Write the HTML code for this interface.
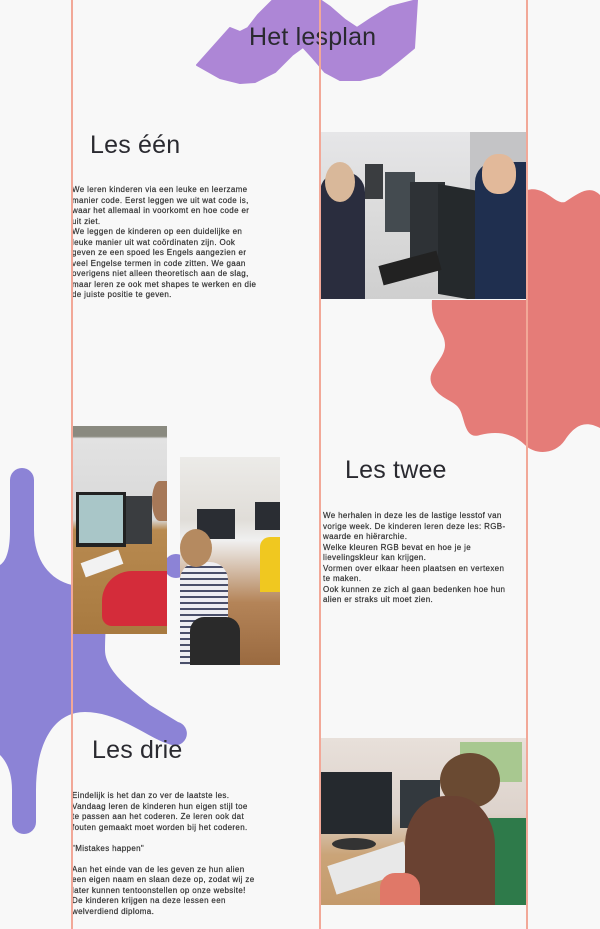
<!DOCTYPE html>
<html><head><meta charset="utf-8"><style>
*{margin:0;padding:0;box-sizing:border-box}
body{width:600px;height:929px;background:#f8f8f8;position:relative;overflow:hidden;font-family:"Liberation Sans",sans-serif;color:#333}
.abs{position:absolute}
.vl{position:absolute;top:0;width:2px;height:929px;background:#f2a898}
h1{position:absolute;font-weight:normal;color:#2a2a30;white-space:nowrap;letter-spacing:0.2px;font-size:25px;line-height:30px}
.t{position:absolute;font-size:8px;line-height:10.5px;color:#333;letter-spacing:0.35px;white-space:nowrap;-webkit-text-stroke:0.2px #333}
.img{position:absolute;overflow:hidden}
</style></head><body>
<svg class="abs" style="left:0;top:0" width="600" height="929">
<polygon points="197,65 230,28 240,32 248,28 258,15 273,0 320,0 330,7 345,20 357,28 372,18 390,7 417,0 414,48 397,62 380,75 360,80 340,80 325,72 313,58 303,47 292,55 275,72 255,82 240,83 220,78" fill="#ad86d6" stroke="#ad86d6" stroke-width="2" stroke-linejoin="round"/>
<path d="M527,190 C545,185 555,205 565,202 C580,192 590,185 600,195 L600,428 C585,420 575,425 565,440 C555,455 535,455 525,445 C515,435 500,430 480,435 C465,440 465,420 460,410 C455,400 440,400 432,385 C425,370 445,360 445,345 C445,330 430,325 432,300 L527,300 Z" fill="#e57c78"/>
<path d="M10,480 A12,12 0 0 1 34,480 L34,530 C34,560 50,580 72,585 L100,590 C110,600 105,620 105,650 C105,670 130,690 150,705 L178,722 A10,10 0 0 1 172,745 C150,740 120,712 85,712 C50,712 36,750 36,790 L36,822 A12,12 0 0 1 12,822 L12,790 C12,770 5,760 0,755 L0,565 C8,560 10,545 10,530 Z" fill="#8c83d6"/>
<circle cx="176" cy="566" r="12" fill="#8c83d6"/>
</svg>

<h1 style="left:249px;top:22px">Het lesplan</h1>
<h1 style="left:90px;top:130px">Les één</h1>
<h1 style="left:345px;top:455px">Les twee</h1>
<h1 style="left:92px;top:735px">Les drie</h1>

<div class="t" style="left:72px;top:185px">We leren kinderen via een leuke en leerzame<br>manier code. Eerst leggen we uit wat code is,<br>waar het allemaal in voorkomt en hoe code er<br>uit ziet.<br>We leggen de kinderen op een duidelijke en<br>leuke manier uit wat coördinaten zijn. Ook<br>geven ze een spoed les Engels aangezien er<br>veel Engelse termen in code zitten. We gaan<br>overigens niet alleen theoretisch aan de slag,<br>maar leren ze ook met shapes te werken en die<br>de juiste positie te geven.</div>

<div class="t" style="left:323px;top:511px">We herhalen in deze les de lastige lesstof van<br>vorige week. De kinderen leren deze les: RGB-<br>waarde en hiërarchie.<br>Welke kleuren RGB bevat en hoe je je<br>lievelingskleur kan krijgen.<br>Vormen over elkaar heen plaatsen en vertexen<br>te maken.<br>Ook kunnen ze zich al gaan bedenken hoe hun<br>alien er straks uit moet zien.</div>

<div class="t" style="left:72px;top:791px">Eindelijk is het dan zo ver de laatste les.<br>Vandaag leren de kinderen hun eigen stijl toe<br>te passen aan het coderen. Ze leren ook dat<br>fouten gemaakt moet worden bij het coderen.<br><br>"Mistakes happen"<br><br>Aan het einde van de les geven ze hun alien<br>een eigen naam en slaan deze op, zodat wij ze<br>later kunnen tentoonstellen op onze website!<br>De kinderen krijgen na deze lessen een<br>welverdiend diploma.</div>

<!-- image 1 -->
<div class="img" style="left:320px;top:132px;width:207px;height:167px;background:linear-gradient(180deg,#e6e6e8 0%,#dcdcdc 45%,#cfcfcf 100%)">
<div class="abs" style="left:150px;top:0;width:57px;height:60px;background:#c4c4c6"></div>
<div class="abs" style="left:0;top:40px;width:45px;height:127px;background:#2a2d3e;border-radius:20px 20px 0 0"></div>
<div class="abs" style="left:5px;top:30px;width:30px;height:40px;background:#d9b89a;border-radius:50%"></div>
<div class="abs" style="left:45px;top:32px;width:18px;height:35px;background:#3a3d40"></div>
<div class="abs" style="left:65px;top:40px;width:30px;height:60px;background:#444b50"></div>
<div class="abs" style="left:90px;top:50px;width:35px;height:80px;background:#2e3236"></div>
<div class="abs" style="left:118px;top:58px;width:70px;height:110px;background:#25292c;transform:skewY(10deg)"></div>
<div class="abs" style="left:155px;top:30px;width:52px;height:137px;background:#1f2f4f;border-radius:20px 0 0 0"></div>
<div class="abs" style="left:162px;top:22px;width:34px;height:40px;background:#e2b99a;border-radius:45%"></div>
<div class="abs" style="left:60px;top:126px;width:60px;height:20px;background:#222;transform:rotate(-15deg)"></div>
</div>

<!-- image 2a -->
<div class="img" style="left:72px;top:426px;width:95px;height:208px;background:linear-gradient(180deg,#8a8a80 0,#8a8a80 5%,#e2e2e2 6%,#d8d8d8 45%,#b88a50 50%,#a87a40 100%)">
<div class="abs" style="left:4px;top:66px;width:50px;height:55px;background:#222"></div>
<div class="abs" style="left:7px;top:69px;width:44px;height:48px;background:#a9c6c8"></div>
<div class="abs" style="left:54px;top:70px;width:26px;height:48px;background:#3a3d40"></div>
<div class="abs" style="left:30px;top:145px;width:65px;height:55px;background:#d42c3a;border-radius:30px 0 0 10px"></div>
<div class="abs" style="left:80px;top:55px;width:15px;height:40px;background:#a67858;border-radius:50% 0 0 50%"></div>
<div class="abs" style="left:10px;top:130px;width:40px;height:15px;background:#f2f2f2;transform:rotate(-20deg)"></div>
</div>

<!-- image 2b -->
<div class="img" style="left:180px;top:457px;width:100px;height:208px;background:linear-gradient(180deg,#ecebe8 0%,#e0ddd8 30%,#f0f0f0 40%,#b48458 70%,#9a6a40 100%)">
<div class="abs" style="left:17px;top:52px;width:38px;height:30px;background:#2a2d33"></div>
<div class="abs" style="left:75px;top:45px;width:25px;height:28px;background:#2a2d33"></div>
<div class="abs" style="left:80px;top:80px;width:20px;height:55px;background:#f0c820;border-radius:10px 0 0 0"></div>
<div class="abs" style="left:0px;top:105px;width:48px;height:103px;background:repeating-linear-gradient(180deg,#eeeef2 0 4px,#4a4f6a 4px 6px);border-radius:18px 18px 0 0"></div>
<div class="abs" style="left:0px;top:72px;width:32px;height:38px;background:#b58a60;border-radius:50%"></div>
<div class="abs" style="left:10px;top:160px;width:50px;height:48px;background:#2a2a2a;border-radius:14px 14px 0 0"></div>
</div>

<!-- image 3 -->
<div class="img" style="left:320px;top:738px;width:207px;height:167px;background:linear-gradient(180deg,#e8e0da 0%,#ddd3cc 45%,#caa478 70%,#c49a6c 100%)">
<div class="abs" style="left:140px;top:4px;width:62px;height:40px;background:#a8c890"></div>
<div class="abs" style="left:0;top:34px;width:72px;height:62px;background:#25292e"></div>
<div class="abs" style="left:80px;top:42px;width:40px;height:48px;background:#33393e"></div>
<div class="abs" style="left:12px;top:100px;width:44px;height:12px;background:#333;border-radius:50%"></div>
<div class="abs" style="left:10px;top:115px;width:80px;height:30px;background:#e8e8e8;transform:rotate(-18deg)"></div>
<div class="abs" style="left:120px;top:15px;width:60px;height:55px;background:#6a4a32;border-radius:50%"></div>
<div class="abs" style="left:150px;top:80px;width:57px;height:87px;background:#2e7a4a;border-radius:20px 0 0 0"></div>
<div class="abs" style="left:85px;top:58px;width:90px;height:110px;background:#6a4232;border-radius:45% 45% 0 0"></div>
<div class="abs" style="left:60px;top:135px;width:40px;height:32px;background:#e07868;border-radius:15px 15px 0 0"></div>
</div>

<div class="vl" style="left:71px"></div>
<div class="vl" style="left:319px"></div>
<div class="vl" style="left:526px"></div>
</body></html>
